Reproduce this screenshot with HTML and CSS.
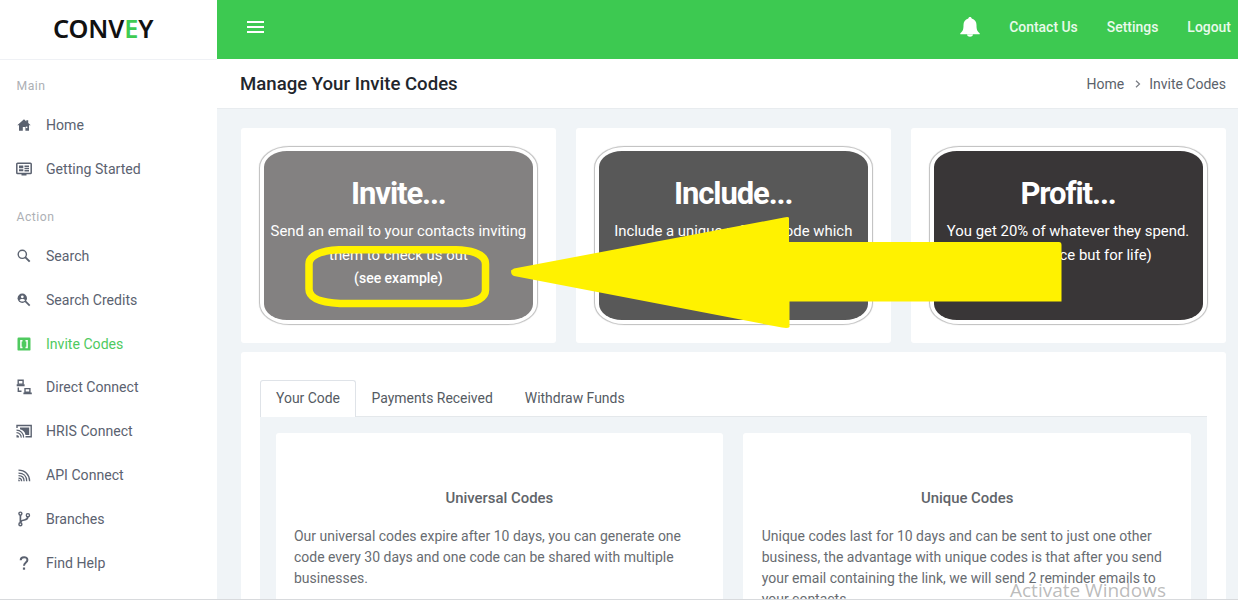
FILE: index.html
```html
<!DOCTYPE html>
<html lang="en">
<head>
<meta charset="utf-8">
<title>Convey - Manage Your Invite Codes</title>
<link rel="stylesheet" href="styles.css">
</head>
<body>
<div class="app">
  <aside class="sidebar">
    <div class="brand"><span class="logo">CONV<span class="logo-accent">E</span>Y</span></div>
    <nav class="nav">
      <div class="nav-label">Main</div>
      <a class="nav-item"><svg class="icon" viewBox="0 0 16 16"><path fill="currentColor" d="M8 2.200 1.300 8.200h1.700v5.600h3.800V10h2.600v3.800h3.600V8.200h1.700L12.200 6V3.200h-1.900v1.200z"/><path fill="#fff" d="M9.800 9.600h1.600v1.500H9.800z"/></svg><span>Home</span></a>
      <a class="nav-item"><svg class="icon" viewBox="0 0 16 16"><path fill="none" stroke="currentColor" stroke-width="1.5" d="M1.6 2.2h12.8a.8.8 0 0 1 .8.8v8.700a.8.8 0 0 1-.8.8H1.6a.8.8 0 0 1-.8-.8V3a.8.8 0 0 1 .8-.8z"/><path fill="currentColor" d="M5.500 12.500h5V14.500h-5zM3 4.500h4.300v2.800H3zM3 8.300h4.300v2H3zM8.500 4.500H13v1.500H8.500zM8.500 6.700H13v1.500H8.500zM8.500 8.900H13v1.500H8.500z"/></svg><span>Getting Started</span></a>
      <div class="nav-label nav-label-action">Action</div>
      <a class="nav-item"><svg class="icon" viewBox="0 0 16 16"><circle cx="6.300" cy="6.300" r="4.100" fill="none" stroke="currentColor" stroke-width="1.400"/><path stroke="currentColor" stroke-width="1.900" d="m9.200 9.200 4.500 4.500"/></svg><span>Search</span></a>
      <a class="nav-item"><svg class="icon" viewBox="0 0 16 16"><circle cx="6.300" cy="6.300" r="4.700" fill="currentColor"/><circle cx="6.300" cy="4.800" r="1.400" fill="#fff"/><path fill="#fff" d="M3.500 8.200C4.300 6.700 8.300 6.700 9.100 8.200 8 10 4.700 10 3.500 8.200z"/><path stroke="currentColor" stroke-width="1.700" d="m9.200 9.200 4.500 4.500"/></svg><span>Search Credits</span></a>
      <a class="nav-item active"><svg class="icon" viewBox="0 0 16 16"><rect x="1.500" y="1.600" width="13" height="13" rx="1.200" fill="currentColor"/><path fill="none" stroke="#fff" stroke-width="1.500" d="M6.500 4.700H4.900v6.900h1.600M9.500 4.700h1.600v6.900H9.500"/></svg><span>Invite Codes</span></a>
      <a class="nav-item"><svg class="icon" viewBox="0 0 16 16"><g fill="none" stroke="currentColor" stroke-width="1.400"><path d="M2.200 1.200h4.900v3.900H2.200zM9 9.600h4.900v3.700H9zM2.300 8.500v3.800h3.200"/></g><path fill="currentColor" d="M.7 5.300h7.900v1.900H.7zM7.400 13.500h8.400v1.700H7.400z"/></svg><span>Direct Connect</span></a>
      <a class="nav-item"><svg class="icon" viewBox="0 0 16 16"><path fill="none" stroke="currentColor" stroke-width="1.400" d="M1 5V2.500h14.200v11.300H9.500"/><path fill="currentColor" d="M4 4.600h9.200v7.300H9.500C9 9 7 7 4 6.300z"/><g fill="none" stroke="currentColor" stroke-width="1.200"><path d="M.5 7.100a7.100 7.100 0 0 1 7.100 7.500M.5 9.600a4.700 4.700 0 0 1 4.700 5"/></g><path fill="currentColor" d="M.5 11.900a2.500 2.500 0 0 1 2.500 2.700H.5z"/></svg><span>HRIS Connect</span></a>
      <a class="nav-item"><svg class="icon" viewBox="0 0 16 16"><g fill="none" stroke="currentColor" stroke-width="1.300"><path d="M2.500 3.200C9 3.200 13.600 7.800 13.600 14.200M2.500 6.100c5 0 8.200 3.200 8.200 8.100M2.500 8.700c3.500 0 5.600 2.100 5.600 5.500M2.500 11.200c2 0 3.100 1.100 3.100 3"/></g><path fill="currentColor" d="M2.300 12.500c1 0 1.600.6 1.600 1.700H2.300z"/></svg><span>API Connect</span></a>
      <a class="nav-item"><svg class="icon" viewBox="0 0 16 16"><g fill="none" stroke="currentColor"><g stroke-width="1.400"><circle cx="4.400" cy="2.600" r="1.500"/><circle cx="4.400" cy="13.200" r="1.500"/><circle cx="11.900" cy="4.200" r="1.600"/></g><path stroke-width="1.700" d="M4.400 4v7.800M11.800 5.800c0 2.700-1.600 3-3.400 3.200-2.200.3-3.800.8-3.800 2.500"/></g></svg><span>Branches</span></a>
      <a class="nav-item"><svg class="icon" viewBox="0 0 16 16"><path fill="none" stroke="currentColor" stroke-width="2" d="M4.700 5.200c0-4 6.700-4.100 6.700-.2C11.400 7.600 8 7.400 8 10.700"/><path fill="currentColor" d="M6.900 12.500h2.200v2.200H6.900z"/></svg><span>Find Help</span></a>
    </nav>
  </aside>
  <div class="main">
    <header class="topbar">
      <svg class="menu" viewBox="0 0 18 14"><path stroke="#fff" stroke-width="2" d="M0 1.700h18M0 7h18M0 12.300h18"/></svg>
      <div class="top-links">
        <svg class="bell" viewBox="0 0 20 20"><path fill="#fff" d="M10 0c1 0 1.600.6 1.700 1.500C15 2.300 16.500 5 16.500 8c0 5 .8 6.300 3.200 8.200v1H.3v-1C2.700 14.300 3.500 13 3.500 8c0-3 1.500-5.700 4.800-6.500C8.400.6 9 0 10 0zM7 17.500h6c-.3 3-5.700 3-6 0z"/></svg>
        <a class="contact">Contact Us</a><a class="settings">Settings</a><a>Logout</a>
      </div>
    </header>
    <div class="titlebar">
      <h1>Manage Your Invite Codes</h1>
      <div class="crumbs"><span>Home</span><svg class="chev" viewBox="0 0 6 8"><path fill="none" stroke="#777b82" stroke-width="1.200" d="m1 .7 3.500 3.300L1 7.300"/></svg><span>Invite Codes</span></div>
    </div>
    <main class="content">
      <section class="steps">
        <div class="card"><div class="frame"><div class="step invite"><h2>Invite...</h2><p>Send an email to your contacts inviting<br>them to check us out</p><a>(see example)</a></div></div></div>
        <div class="card"><div class="frame"><div class="step include"><h2>Include...</h2><p>Include a unique referral code which</p></div></div></div>
        <div class="card"><div class="frame"><div class="step profit"><h2>Profit...</h2><p>You get 20% of whatever they spend.<br>(not just once but for life)</p></div></div></div>
      </section>
      <section class="panel">
        <div class="tabs"><a class="tab current">Your Code</a><a class="tab payments">Payments Received</a><a class="tab">Withdraw Funds</a></div>
        <div class="tab-content">
          <article class="code-card"><h3>Universal Codes</h3><p>Our universal codes expire after 10 days, you can generate one<br>code every 30 days and one code can be shared with multiple<br>businesses.</p></article>
          <article class="code-card"><h3>Unique Codes</h3><p>Unique codes last for 10 days and can be sent to just one other<br>business, the advantage with unique codes is that after you send<br>your email containing the link, we will send 2 reminder emails to<br>your contacts.</p></article>
        </div>
      </section>
    </main>
  </div>
  <svg class="annotation" viewBox="0 0 1238 600">
    <path fill="none" stroke="#fff200" stroke-width="7.500" d="M339 249.700H456C476 250.500 485.500 256 485.500 264V290C485.500 298 476 302.500 462 303.500H340C320 302.500 309 298 309 289V264C309 256 320 250.500 339 249.700Z"/>
    <path fill="#fff200" d="M511 270.500 514 268.500 784 217.500Q789 216.500 789 218V242H1059Q1061.500 242 1061.500 245V301.500H789.500V327Q788 328.500 782 327.500L514 276Q511 275 511 270.500Z"/>
  </svg>
  <div class="watermark">Activate Windows</div>
</div>
</body>
</html>
```
FILE: styles.css
```css
* { box-sizing: border-box; }
body { margin: 0; font-family: Roboto, "Liberation Sans", sans-serif; font-size: 14px; color: #5b626b; }
h1, h2, h3, p { margin: 0; }
.app { position: relative; display: flex; width: 1238px; height: 600px; overflow: hidden; border-bottom: 1px solid #d8dadd; background: #f0f4f7; }
.sidebar { width: 217px; flex: none; background: #fff; }
.brand { height: 60px; padding: 12px 0 0 53px; border-bottom: 1px solid #eff1f5; }
.logo { font: 600 25.3px/32px "Noto Sans", "Open Sans", sans-serif; color: #111; letter-spacing: -.1px; }
.logo-accent { color: #3ecb52; }
.nav { padding-top: 17px; }
.nav-label { height: 26px; padding-left: 16.500px; font-size: 12.2px; line-height: 19px; letter-spacing: .5px; color: #adb0b5; }
.nav-label-action { margin-top: 17.500px; height: 26px; }
.nav-item { display: flex; align-items: center; gap: 14px; height: 43.8px; padding-left: 16px; color: #5b6270; font-size: 14.1px; white-space: nowrap; }
.nav-item.active { color: #4fca5f; }
.icon { width: 16px; height: 16px; flex: none; }
.main { flex: 1; min-width: 0; }
.topbar { display: flex; align-items: center; justify-content: space-between; height: 59px; padding: 0 7px 5px 30px; background: #3dc951; color: #fff; }
.menu { width: 17px; height: 14px; }
.top-links { display: flex; align-items: center; font-weight: 500; font-size: 13.95px; color: #e9faeb; }
.bell { width: 20px; height: 20px; margin-right: 29px; }
.contact, .settings { margin-right: 29px; }
.titlebar { display: flex; justify-content: space-between; align-items: center; height: 50px; padding: 0 12px 0 23px; background: #fff; border-bottom: 1px solid #e8ecef; }
.titlebar h1 { font-size: 18.6px; font-weight: 500; color: #22262c; }
.crumbs { display: flex; align-items: center; }
.chev { width: 6px; height: 8px; margin: 0 8px 0 11px; }
.content { padding: 19px 12.500px 0 24px; }
.steps { display: grid; grid-template-columns: repeat(3, 1fr); gap: 20px; }
.card { height: 215px; padding: 18px; border-radius: 3px; background: #fff; }
.frame { height: 179px; padding: 4px; border: 1.500px solid #c4c4c4; border-radius: 30px / 22px; box-shadow: 0 0 1px #bbb; }
.step { height: 169px; padding-top: 24px; border-radius: 23px / 16px; text-align: center; color: #fff; white-space: nowrap; }
.invite { background: #838181; }
.include { background: #585858; }
.profit { background: #393637; }
.step h2 { font-size: 31px; line-height: 38px; font-weight: 700; letter-spacing: -1.1px; }
.step p { margin-top: 7px; font-size: 14.9px; line-height: 23.500px; }
.step a { display: block; font-size: 14px; line-height: 22px; font-weight: 500; }
.panel { height: 260px; margin-top: 9px; padding: 28px 19px 0; border-radius: 3px; background: #fff; }
.tabs { display: flex; height: 37px; border-bottom: 1px solid #e4e8eb; }
.tab { height: 37px; padding: 0 16px; line-height: 37px; font-size: 13.950px; white-space: nowrap; color: #555b63; }
.tab.current { width: 95.500px; padding: 0 15px; line-height: 35px; border: 1px solid #dfe3e8; border-bottom: 0; border-radius: 3px 3px 0 0; background: #fff; }
.tab-content { display: grid; grid-template-columns: 1fr 1fr; gap: 20px; height: 195px; padding: 16px 15.500px 0; background: #f0f4f7; }
.code-card { padding: 55px 18.500px 0; border-radius: 3px; background: #fff; color: #686c71; }
.code-card h3 { text-align: center; font-size: 14.9px; line-height: 20px; font-weight: 500; color: #606469; }
.code-card p { margin-top: 17.500px; font-size: 13.970px; line-height: 21px; white-space: nowrap; }
.annotation { position: absolute; left: 0; top: 0; width: 1238px; height: 600px; }
.watermark { position: absolute; left: 1010px; top: 577px; font: 19px/26px "Open Sans", sans-serif; color: rgba(145, 145, 145, .62); white-space: nowrap; }
```
